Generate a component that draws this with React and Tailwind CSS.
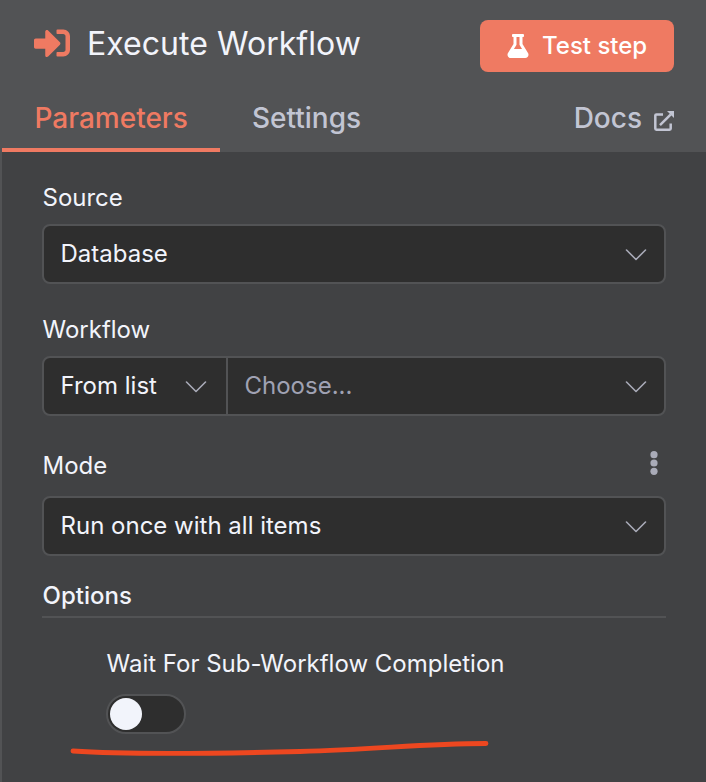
import { useState } from 'react';
import { FaSignInAlt, FaFlask } from 'react-icons/fa';

function Chevron() {
  return (
    <svg className="w-[22px] h-3 mt-px shrink-0" viewBox="0 0 22 12" fill="none" stroke="#a9abb8" strokeWidth="1.6" strokeLinecap="round" strokeLinejoin="round">
      <path d="M1.5 1 11 10.5 20.5 1" />
    </svg>
  );
}

function ExternalIcon() {
  return (
    <svg className="w-5 h-5 mt-1.5" viewBox="0 0 20 20" fill="none" stroke="currentColor" strokeWidth="2.5">
      <path d="M9 3.4H2.4a1.1 1.1 0 0 0-1.1 1.1v13.1a1.1 1.1 0 0 0 1.1 1.1h13.2a1.1 1.1 0 0 0 1.1-1.1V12.500" />
      <path d="M6 14.2 16.800 3.4" />
      <path d="M13 0h7v7z" fill="currentColor" stroke="none" />
    </svg>
  );
}

function Select({ value }) {
  return (
    <button className="flex items-center justify-between w-full h-15 pl-[16.5px] pr-[17px] rounded-lg border-2 border-[#525355] bg-[#2e2e2e] text-left">
      <span>{value}</span>
      <Chevron />
    </button>
  );
}

export default function App() {
  const [wait, setWait] = useState(false);

  return (
    <main className="flex flex-col w-[706px] h-[782px] overflow-hidden bg-[#414244] font-['Inter',sans-serif] text-2xl text-[#f2f4fb]">
      <header className="h-38 shrink-0 bg-[#525355]">
        <div className="flex items-start justify-between pl-[34px] pr-8 pt-5 h-[84px]">
          <div className="flex items-center pt-1">
            <FaSignInAlt size={36} className="mb-[3px] text-[#ef7a62]" />
            <h1 className="ml-[17px] text-[32px] leading-10 tracking-[0.04px]">Execute Workflow</h1>
          </div>
          <button className="flex items-center gap-3 w-[194px] h-[52px] pl-[26px] rounded-lg bg-[#ef7a62] text-white font-medium">
            <FaFlask size={24} />
            <span>Test step</span>
          </button>
        </div>
        <nav className="flex h-17 pl-0.5 pr-8 text-[28px] leading-10 font-medium text-[#c2c5d3]">
          <a className="w-[218px] pl-[32.5px] pt-3.5 border-b-4 border-[#ef7a62] text-[#ef7a62]">Parameters</a>
          <a className="ml-8 pt-3.5">Settings</a>
          <a className="flex items-center gap-3 h-10 mt-3.5 ml-auto">
            Docs
            <ExternalIcon />
          </a>
        </nav>
      </header>

      <div className="flex-1 border-l-2 border-[#525355] pl-10 pr-10 pt-7">
        <section>
          <div className="h-11 leading-9 pl-[0.5px]">Source</div>
          <Select value="Database" />
        </section>

        <section className="mt-7">
          <div className="h-11 leading-9 pl-[0.5px]">Workflow</div>
          <div className="flex h-15 rounded-lg border-2 border-[#525355] bg-[#2e2e2e]">
            <button className="flex items-center justify-between w-[184px] pl-[16.5px] pr-[19px] border-r-2 border-[#525355]">
              <span>From list</span>
              <Chevron />
            </button>
            <button className="flex flex-1 items-center justify-between pl-[16.5px] pr-[17px] text-[#a0a2b3]">
              <span>Choose...</span>
              <Chevron />
            </button>
          </div>
        </section>

        <section className="mt-8">
          <div className="flex justify-between h-12 leading-9 pl-[0.5px] pr-2">
            <span>Mode</span>
            <svg className="w-2 h-6 mt-[3px]" viewBox="0 0 8 24" fill="#a9abb8">
              <circle cx="4" cy="3.7" r="3.6" />
              <circle cx="4" cy="12" r="3.6" />
              <circle cx="4" cy="20.3" r="3.6" />
            </svg>
          </div>
          <Select value="Run once with all items" />
        </section>

        <section className="mt-[22px]">
          <div className="h-10 leading-9 pl-[0.5px] border-b-2 border-[#525355] font-medium">Options</div>
          <div className="pl-16 pt-7">
            <div className="leading-9 pl-[0.5px]">Wait For Sub-Workflow Completion</div>
            <button
              role="switch"
              aria-checked={wait}
              onClick={() => setWait(!wait)}
              className={`flex items-center w-20 h-10 mt-3 px-0.5 rounded-full border-2 border-[#525355] bg-[#2e2e2e] ${wait ? 'justify-end' : ''}`}
            >
              <span className="w-8 h-8 rounded-full bg-[#f2f4fb]" />
            </button>
          </div>
          <svg className="w-[420px] h-5 ml-7 mt-1" viewBox="0 0 420 20" fill="none" stroke="#ed4720" strokeWidth="4.8" strokeLinecap="round">
            <path d="M3 13C60 17 150 15.500 230 13.500C310 11.500 350 5.500 416 5.500" />
          </svg>
        </section>
      </div>
    </main>
  );
}
